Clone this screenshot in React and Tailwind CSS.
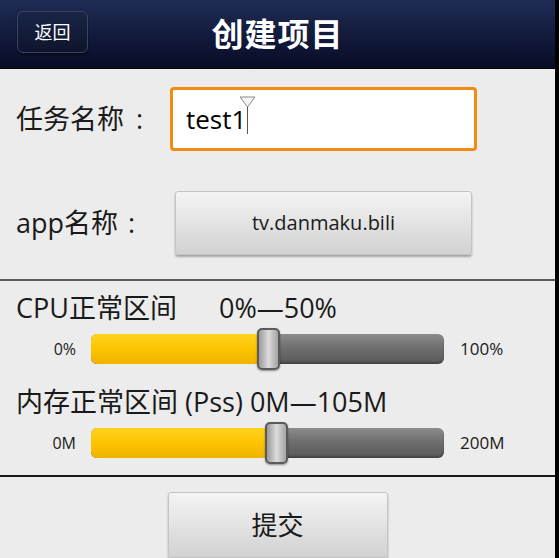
import React from 'react';

const font = { fontFamily: '"Open Sans", "Noto Sans CJK SC", sans-serif' };

function Slider({ min, max, percent }) {
  return (
    <div className="flex items-center h-[42px]">
      <div className="w-[91px] pr-[15px] text-right text-[16px] text-[#1a1a1a]">{min}</div>
      <div className="relative w-[353px] h-[30px]">
        <div className="absolute inset-0 rounded-[6px] bg-gradient-to-b from-[#8c8c8c] via-[#6c6c6c] to-[#5a5a5a] shadow-[inset_0_-2px_2px_rgba(0,0,0,0.25)]" />
        <div
          className="absolute left-0 top-0 h-full rounded-l-[6px] bg-gradient-to-b from-[#ffd31c] via-[#fcc400] to-[#f0b300]"
          style={{ width: `${percent}%` }}
        />
        <div
          className="absolute top-[-6px] w-[23px] h-[42px] -ml-[11px] rounded-[5px] border-2 border-[#5a5a5a] bg-gradient-to-r from-[#9a9a9a] via-[#dcdcdc] to-[#a4a4a4] shadow-[0_1px_2px_rgba(0,0,0,0.4)]"
          style={{ left: `${percent}%` }}
        />
      </div>
      <div className="pl-[16px] text-[17px] text-[#1a1a1a]">{max}</div>
    </div>
  );
}

export default function App() {
  return (
    <div className="flex w-[559px] h-[558px] overflow-hidden" style={font}>
      <div className="flex flex-col w-[555px] bg-[#ececec]">
        <div className="relative flex items-center justify-center h-[69px] border-b border-black bg-gradient-to-b from-[#1f2c55] to-[#080c26]">
          <button className="absolute left-[17px] top-[11px] w-[71px] h-[42px] rounded-[6px] border border-[#3a4566] bg-gradient-to-b from-[#1a2546] to-[#0e142c] text-white text-[18px] shadow-[0_2px_2px_rgba(0,0,0,0.5)]">
            返回
          </button>
          <h1 className="text-white text-[32px] font-bold tracking-[1px]">创建项目</h1>
        </div>

        <div className="flex items-center h-[64px] mt-[18px]">
          <div className="w-[170px] pl-[16px] text-[27px] text-[#1a1a1a]">
            任务名称<span className="ml-[12px]">:</span>
          </div>
          <div className="relative flex items-center w-[307px] h-[64px] rounded-[4px] border-[3px] border-[#f28a14] bg-white pl-[13px] text-[26px] text-black">
            <span>test1</span>
            <span className="relative ml-[1px] w-[1px] h-[30px] bg-[#555]">
              <svg className="absolute -top-[8px] -left-[8px]" width="17" height="12" viewBox="0 0 17 12">
                <path d="M1 1 L16 1 L8.5 11 Z" fill="#f4f4f4" stroke="#8a8a8a" strokeWidth="1" />
              </svg>
            </span>
          </div>
        </div>

        <div className="flex items-center h-[64px] mt-[40px]">
          <div className="w-[175px] pl-[16px] text-[27px] text-[#1a1a1a]">
            app名称<span className="ml-[10px]">:</span>
          </div>
          <div className="flex items-center justify-center w-[297px] h-[64px] rounded-[3px] border border-[#c4c4c4] bg-gradient-to-b from-[#f4f4f4] to-[#d2d2d2] text-[20px] text-[#1a1a1a] shadow-[0_2px_2px_rgba(0,0,0,0.3)]">
            tv.danmaku.bili
          </div>
        </div>

        <div className="mt-[24px] h-[2px] bg-[#5a5a5a]" />

        <div className="flex items-center h-[32px] mt-[11px] pl-[16px] text-[27px] text-[#1a1a1a]">
          <span>CPU正常区间</span>
          <span className="ml-[42px]">0%—50%</span>
        </div>
        <div className="mt-[4px]">
          <Slider min="0%" max="100%" percent={50} />
        </div>

        <div className="flex items-center h-[32px] mt-[16px] pl-[16px] text-[27px] text-[#1a1a1a]">
          内存正常区间 (Pss) 0M—105M
        </div>
        <div className="mt-[4px]">
          <Slider min="0M" max="200M" percent={52.5} />
        </div>

        <div className="mt-[11px] h-[2px] bg-[#1a1a1a]" />

        <div className="flex justify-center mt-[15px]">
          <div className="flex items-center justify-center w-[220px] h-[66px] rounded-[3px] border border-[#c4c4c4] bg-gradient-to-b from-[#f4f4f4] to-[#d2d2d2] text-[26px] text-[#1a1a1a] shadow-[0_2px_2px_rgba(0,0,0,0.3)]">
            提交
          </div>
        </div>
      </div>
      <div className="w-[4px] bg-black" />
    </div>
  );
}
